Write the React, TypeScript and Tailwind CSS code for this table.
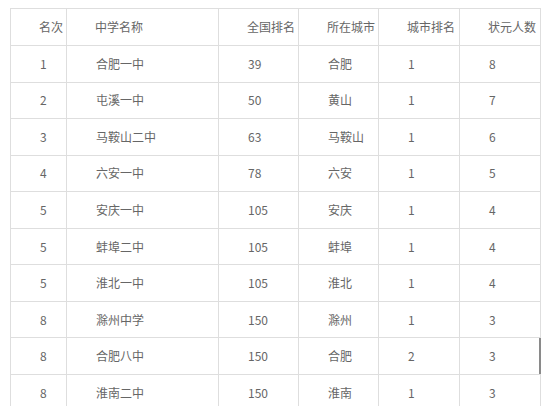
const rows = [
  ['1', '合肥一中', '39', '合肥', '1', '8'],
  ['2', '屯溪一中', '50', '黄山', '1', '7'],
  ['3', '马鞍山二中', '63', '马鞍山', '1', '6'],
  ['4', '六安一中', '78', '六安', '1', '5'],
  ['5', '安庆一中', '105', '安庆', '1', '4'],
  ['5', '蚌埠二中', '105', '蚌埠', '1', '4'],
  ['5', '淮北一中', '105', '淮北', '1', '4'],
  ['8', '滁州中学', '150', '滁州', '1', '3'],
  ['8', '合肥八中', '150', '合肥', '2', '3'],
  ['8', '淮南二中', '150', '淮南', '1', '3'],
];

const headers = ['名次', '中学名称', '全国排名', '所在城市', '城市排名', '状元人数'];
const widths = [56, 152, 80, 80, 81, 81];

export default function App() {
  return (
    <div className="w-[550px] h-[406px] overflow-hidden bg-white pt-[8px] pl-[10px] font-['Noto_Sans_CJK_SC','Microsoft_YaHei',sans-serif] text-[12px] text-[#666]">
      <table className="w-[530px] table-fixed border-collapse">
        <colgroup>
          {widths.map((w, i) => (
            <col key={i} style={{ width: w }} />
          ))}
        </colgroup>
        <thead>
          <tr className="h-[37px]">
            {headers.map((h) => (
              <th key={h} className="border border-[#dedede] pl-[28px] text-left font-normal leading-none">
                {h}
              </th>
            ))}
          </tr>
        </thead>
        <tbody>
          {rows.map((r, ri) => (
            <tr key={ri} className="h-[36.55px]">
              {r.map((c, ci) => (
                <td key={ci} className="relative border border-[#dedede] pl-[29px] text-left leading-none">
                  {c}
                  {ri === 8 && ci === 5 && (
                    <span className="absolute right-[-1px] top-0 bottom-0 w-[2px] bg-[#8a8a8a]" />
                  )}
                </td>
              ))}
            </tr>
          ))}
        </tbody>
      </table>
    </div>
  );
}
